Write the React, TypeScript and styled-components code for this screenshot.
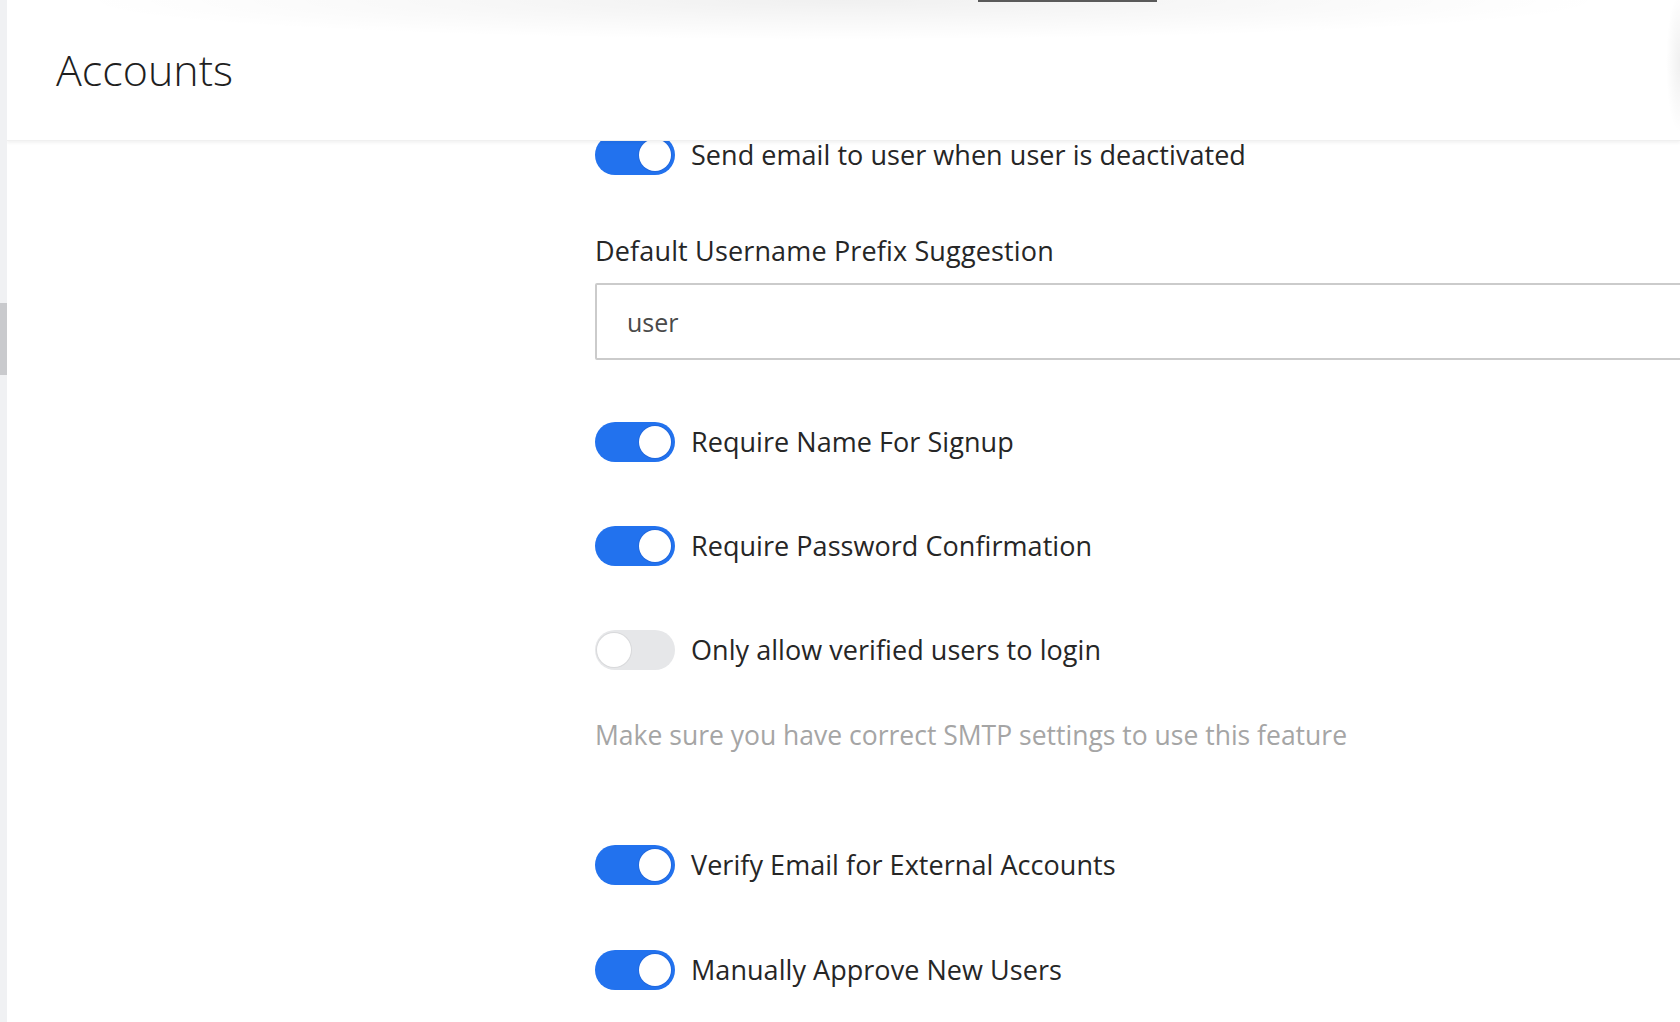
import React from "react";
import styled, { createGlobalStyle } from "styled-components";

const GlobalStyle = createGlobalStyle`
  html, body {
    margin: 0;
    padding: 0;
    background: #ffffff;
    overflow: hidden;
  }
  body {
    font-family: "Open Sans", "Noto Sans", "Liberation Sans", sans-serif;
    color: #333;
  }
  * { box-sizing: border-box; }
`;

const Page = styled.div`
  display: flex;
  width: 1680px;
  height: 1022px;
  overflow: hidden;
`;

const SideEdge = styled.div`
  width: 7px;
  flex: none;
  background: #f0f1f3;
  display: flex;
  flex-direction: column;
`;

const ScrollThumb = styled.div`
  margin-top: 303px;
  height: 72px;
  background: #c9cacd;
`;

const Main = styled.div`
  flex: 1;
  min-width: 0;
  display: flex;
  flex-direction: column;
  overflow: hidden;
`;

const Header = styled.header`
  position: relative;
  z-index: 2;
  height: 141px;
  flex: none;
  display: flex;
  align-items: center;
  padding-left: 49px;
  background:
    radial-gradient(ellipse 46% 40px at 50% 0, rgba(0, 0, 0, 0.06), rgba(0, 0, 0, 0) 100%),
    radial-gradient(ellipse 14px 50% at 100% 45%, rgba(0, 0, 0, 0.06), rgba(0, 0, 0, 0) 100%),
    #ffffff;
  box-shadow: 0 2px 3px rgba(0, 0, 0, 0.05);
  border-bottom: 1px solid #f0f0f0;
`;

const TabIndicator = styled.div`
  position: absolute;
  top: 0;
  left: 971px;
  width: 179px;
  height: 2px;
  background: #5a5a5a;
`;

const Title = styled.h1`
  margin: 0;
  font-size: 43px;
  font-weight: 300;
  line-height: 60px;
  color: #1f1f1f;
`;

const Content = styled.div`
  margin-top: -6px;
  padding-left: 588px;
  display: flex;
  flex-direction: column;
`;

const Row = styled.div<{ $mt?: number }>`
  display: flex;
  align-items: center;
  gap: 16px;
  height: 40px;
  margin-top: ${(p) => p.$mt ?? 0}px;
`;

const Track = styled.div<{ $on: boolean }>`
  width: 80px;
  height: 40px;
  flex: none;
  border-radius: 20px;
  background: ${(p) => (p.$on ? "#2272ee" : "#e6e7e9")};
  display: flex;
  align-items: center;
  justify-content: ${(p) => (p.$on ? "flex-end" : "flex-start")};
  padding: 0 ${(p) => (p.$on ? 4 : 2)}px;
`;

const Knob = styled.div<{ $on: boolean }>`
  width: ${(p) => (p.$on ? 32 : 34)}px;
  height: ${(p) => (p.$on ? 32 : 34)}px;
  border-radius: 50%;
  background: #ffffff;
  box-shadow: ${(p) =>
    p.$on ? "0 0 0 1px rgba(30, 90, 200, 0.4)" : "0 0 0 1px rgba(0, 0, 0, 0.06)"};
`;

const RowLabel = styled.span`
  font-size: 27px;
  line-height: 36px;
  letter-spacing: 0.05px;
  color: #262626;
  white-space: nowrap;
`;

const FieldLabel = styled.label<{ $mt: number }>`
  display: block;
  margin-top: ${(p) => p.$mt}px;
  font-size: 27px;
  line-height: 36px;
  letter-spacing: 0.15px;
  color: #262626;
  white-space: nowrap;
`;

const TextInput = styled.input`
  display: block;
  margin-top: 14px;
  width: 1200px;
  height: 77px;
  border: 2px solid #cbcbcb;
  border-radius: 2px;
  padding: 0 30px;
  font-family: inherit;
  font-size: 25px;
  color: #4a4a4a;
  background: #fff;
  outline: none;
`;

const Hint = styled.p<{ $mt: number }>`
  margin: ${(p) => p.$mt}px 0 0;
  font-size: 26.5px;
  line-height: 36px;
  color: #a5a5a5;
  white-space: nowrap;
`;

type ToggleRowProps = { on: boolean; label: string; mt?: number };

const ToggleRow = ({ on, label, mt }: ToggleRowProps) => (
  <Row $mt={mt}>
    <Track $on={on}>
      <Knob $on={on} />
    </Track>
    <RowLabel>{label}</RowLabel>
  </Row>
);

export default function App() {
  return (
    <>
      <GlobalStyle />
      <Page>
        <SideEdge>
          <ScrollThumb />
        </SideEdge>
        <Main>
          <Header>
            <TabIndicator />
            <Title>Accounts</Title>
          </Header>
          <Content>
            <ToggleRow on label="Send email to user when user is deactivated" />
            <FieldLabel $mt={58}>Default Username Prefix Suggestion</FieldLabel>
            <TextInput defaultValue="user" readOnly />
            <ToggleRow on label="Require Name For Signup" mt={62} />
            <ToggleRow on label="Require Password Confirmation" mt={64} />
            <ToggleRow on={false} label="Only allow verified users to login" mt={64} />
            <Hint $mt={47}>Make sure you have correct SMTP settings to use this feature</Hint>
            <ToggleRow on label="Verify Email for External Accounts" mt={92} />
            <ToggleRow on label="Manually Approve New Users" mt={65} />
          </Content>
        </Main>
      </Page>
    </>
  );
}
